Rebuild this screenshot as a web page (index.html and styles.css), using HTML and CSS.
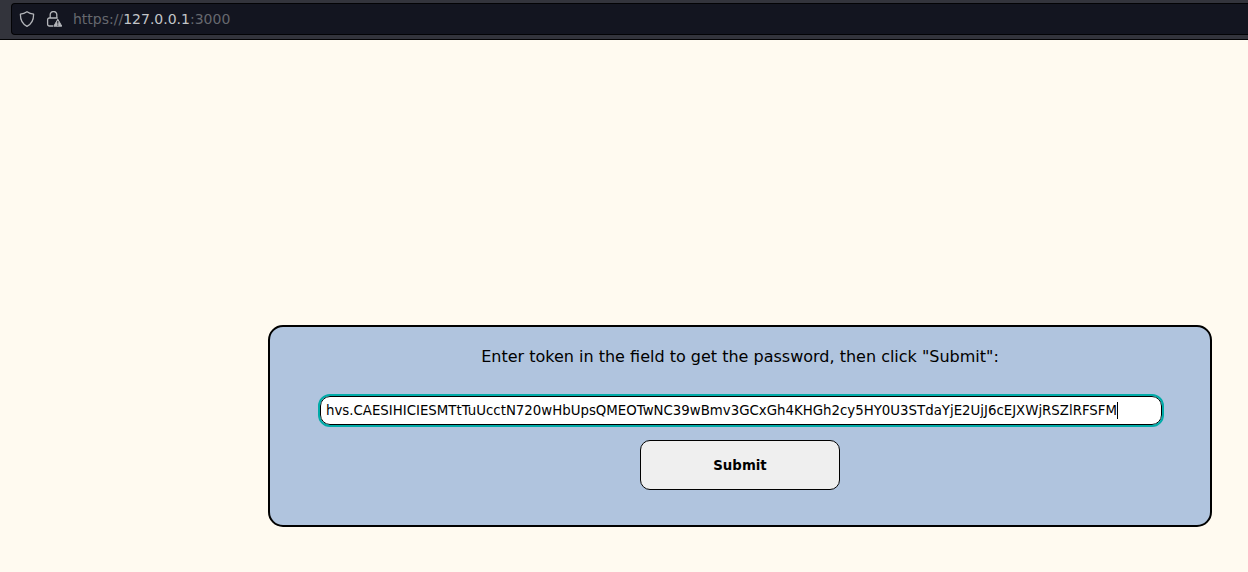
FILE: index.html
```html
<!DOCTYPE html>
<html lang="en">
<head>
<meta charset="utf-8">
<title>Token</title>
<link rel="stylesheet" href="styles.css">
</head>
<body>
<header class="toolbar">
  <div class="urlbar">
    <svg class="icon shield" width="16" height="16" viewBox="0 0 16 16" fill="none" stroke="#b4b6ba" stroke-width="1.3" stroke-linejoin="round"><path d="M8 .7Q11 2.600 14.600 3.200C14.700 9 12.500 13.300 8 15.300 3.500 13.300 1.300 9 1.400 3.200Q5 2.600 8 .7z"/></svg>
    <svg class="icon lock" width="16" height="16" viewBox="0 0 16 16"><path d="M4.200 7V3.600a3 3 0 0 1 3-3h.6a3 3 0 0 1 3 3V7M7 15H3.300a1.700 1.700 0 0 1-1.700-1.700V8.700A1.700 1.700 0 0 1 3.300 7h8.400" fill="none" stroke="#b4b6ba" stroke-width="1.300"/><path d="M11.800 8.200 15.800 15.200H7.800z" fill="#b4b6ba" stroke="#b4b6ba" stroke-width="1" stroke-linejoin="round"/><path d="M11.800 10v2.700M11.800 13.500v1.100" stroke="#11131c" stroke-width="1"/></svg>
    <div class="url">https://<span class="host">127.0.0.1</span>:3000</div>
  </div>
</header>
<main class="page">
  <form class="card">
    <label class="prompt" for="token">Enter token in the field to get the password, then click "Submit":</label>
    <div class="field" id="token"><span class="value">hvs.CAESIHICIESMTtTuUcctN720wHbUpsQMEOTwNC39wBmv3GCxGh4KHGh2cy5HY0U3STdaYjE2UjJ6cEJXWjRSZlRFSFM</span><span class="caret"></span></div>
    <button class="submit" type="button">Submit</button>
  </form>
</main>
</body>
</html>
```
FILE: styles.css
```css
* { box-sizing: border-box; }
body { margin: 0; height: 572px; overflow: hidden; background: #fffaf0; font-family: "DejaVu Sans", sans-serif; color: #000; }
.toolbar { height: 40px; padding: 3px 0 0 11px; background: #33343c; border-bottom: 1px solid #030305; }
.urlbar { height: 32px; display: flex; align-items: center; padding-left: 7px; background: #131520; border: 1px solid #030305; border-right: 0; border-radius: 4px 0 0 4px; }
.icon { display: block; flex: none; }
.lock { margin-left: 11px; }
.url { margin-left: 11px; font-size: 14px; color: #66686e; white-space: nowrap; }
.host { color: #c3c5c8; }
.page { padding: 285px 36px 0 268px; }
.card { height: 202px; display: flex; flex-direction: column; align-items: center; padding-top: 20px; background: #b0c4de; border: 2px solid #000; border-radius: 15px; }
.prompt { font-size: 16px; line-height: 19px; white-space: nowrap; }
.field { width: 842px; height: 29px; margin-top: 30px; margin-left: 2px; padding-left: 5px; display: flex; align-items: center; background: #fff; border: 1px solid #000; border-radius: 10px; outline: 2px solid #00aba8; font-size: 13.333px; white-space: nowrap; }
.caret { width: 1px; height: 17px; background: #000; }
.submit { width: 200px; height: 50px; margin-top: 15px; padding: 0; background: #efefef; border: 1px solid #000; border-radius: 10px; font: bold 13.333px "DejaVu Sans", sans-serif; color: #000; }
```
